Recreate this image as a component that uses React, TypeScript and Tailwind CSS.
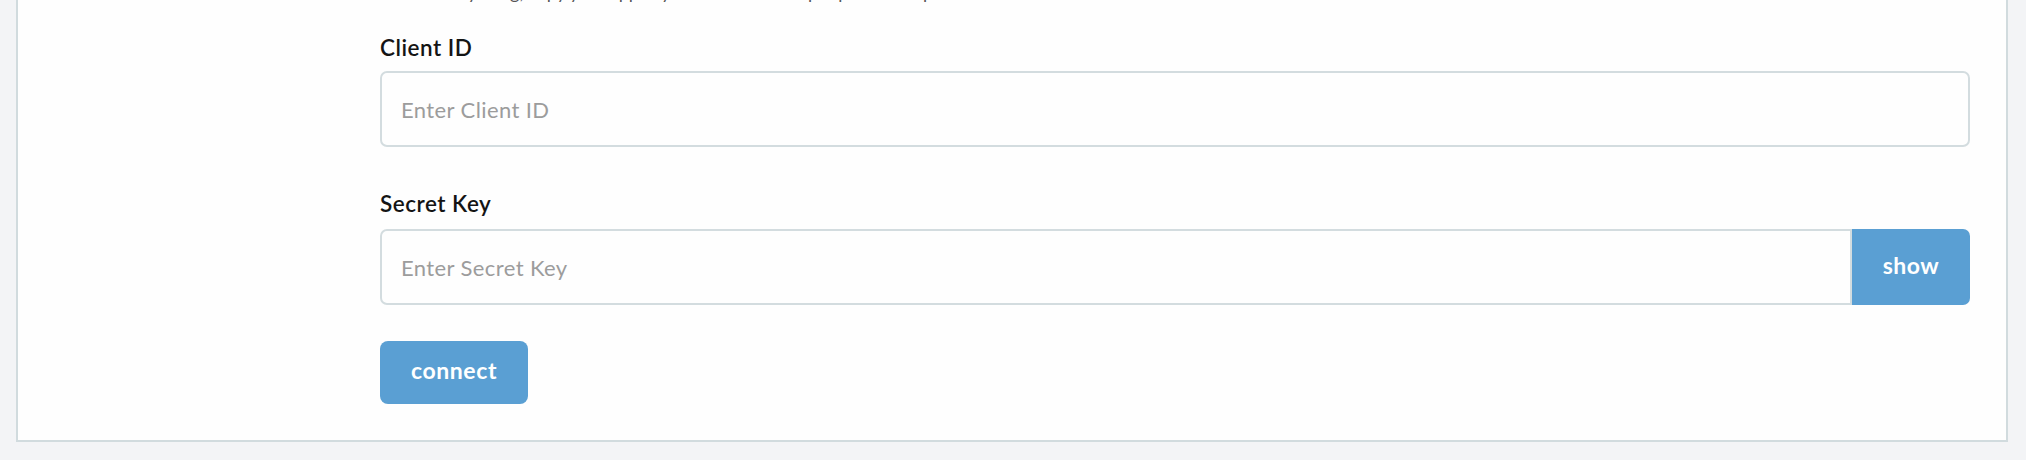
import React from "react";

export default function App() {
  const font = { fontFamily: "Lato, 'Open Sans', sans-serif" };
  return (
    <div className="w-[2026px] h-[460px] bg-[#f3f4f6] pl-[16px] pr-[18px] overflow-hidden" style={font}>
      <div className="h-[442px] bg-[#fefefe] border-x-2 border-b-2 border-[#d1dbde] pl-[362px] pr-[36px] overflow-hidden">
        <p className="mt-[-20px] text-[18px] leading-[24px] text-[#555] whitespace-nowrap">
          To enable syncing, copy your app keys from the developer portal and paste them into the fields below.
        </p>
        <label className="block mt-[31px] text-[22.5px] leading-[26px] font-semibold tracking-[0.5px] text-[#141414]">Client ID</label>
        <input
          className="mt-[10px] block w-full h-[76px] border-2 border-[#d3dcdf] rounded-[7px] bg-[#fefefe] px-[19px] text-[22px] tracking-[0.4px] text-[#333] placeholder:text-[#9c9c9c] outline-none"
          placeholder="Enter Client ID"
        />
        <label className="block mt-[44px] text-[22.5px] leading-[26px] font-semibold tracking-[0.5px] text-[#141414]">Secret Key</label>
        <div className="mt-[12px] flex h-[76px]">
          <input
            className="flex-1 min-w-0 h-full border-2 border-[#d3dcdf] rounded-l-[7px] bg-[#fefefe] px-[19px] text-[22px] tracking-[0.4px] text-[#333] placeholder:text-[#9c9c9c] outline-none"
            placeholder="Enter Secret Key"
          />
          <button className="w-[118px] h-full bg-[#5a9fd3] text-white text-[23px] font-bold tracking-[0.5px] rounded-r-[7px] pb-[3px]">show</button>
        </div>
        <button className="mt-[36px] w-[148px] h-[63px] bg-[#5a9fd3] text-white text-[23px] font-bold tracking-[0.6px] rounded-[8px] pb-[4px]">connect</button>
      </div>
    </div>
  );
}
